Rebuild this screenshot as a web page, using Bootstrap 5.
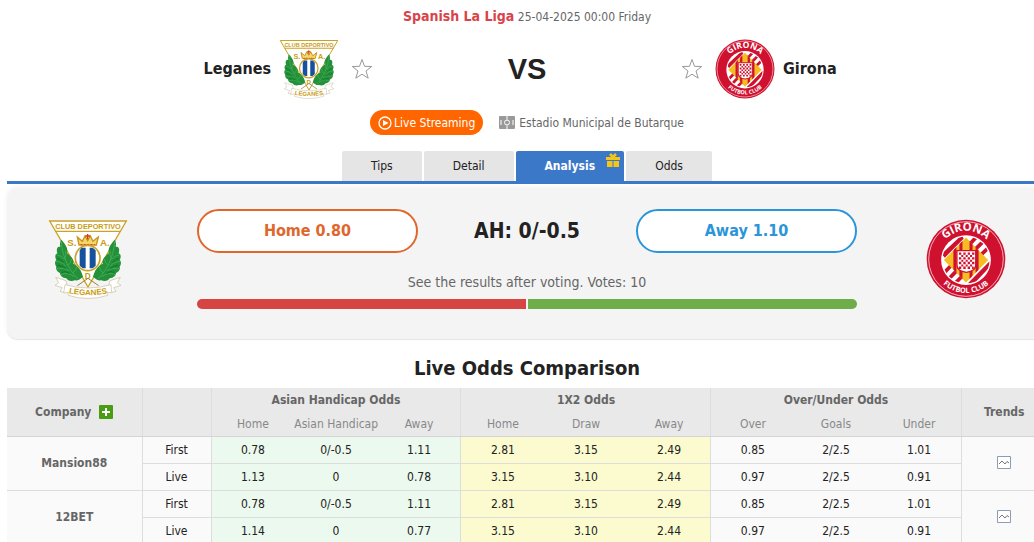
<!DOCTYPE html>
<html lang="en">
<head>
<meta charset="utf-8">
<meta name="viewport" content="width=device-width, initial-scale=1">
<title>Leganes VS Girona - Analysis</title>
<link href="https://cdn.jsdelivr.net/npm/bootstrap@5.3.0/dist/css/bootstrap.min.css" rel="stylesheet">
<style>
  body { font-family: "DejaVu Sans Condensed", "Open Sans", sans-serif; font-size: 12px; line-height: 18px; color: #222; background: #fff; overflow-x: hidden; }
  a { color: inherit; text-decoration: none; }
  svg { display: block; flex: none; }
  .site { margin-left: 7px; min-width: 1040px; }
  .fixture { padding-top: 6px; line-height: 20px; }
  .league { font-size: 14px; color: #d9434a; }
  .muted { color: #666; }
  .teams { margin-top: 12px; }
  .club { font-size: 16px; line-height: 24px; }
  .versus { width: 308px; font: bold 29px/36px "Liberation Sans", Arial, sans-serif; }
  .venue { padding-top: 11px; }
  .stream { height: 25px; padding: 0 8px; gap: 2px; border: 0; border-radius: 13px; background: #ff6600; color: #fff; }
  .tabs { border-bottom: 3px solid #3c78c8; gap: 2px; }
  .tabs a { position: relative; height: 30px; line-height: 31px; padding: 0 29px; background: #e5e5e5; border-radius: 2px 2px 0 0; }
  .tabs a.active { background: #3c78c8; color: #fff; font-weight: bold; }
  .tabs svg { position: absolute; top: 2px; right: 4px; }
  .vote { margin-top: 5px; padding: 20px 41px 30px; background: #f4f4f4; border-radius: 10px; border-bottom: 1px solid #e6e6e6; box-shadow: 0 -2px 5px rgba(0,0,0,.06); }
  .ballot { width: 660px; }
  .pick { width: 221px; height: 44px; border-radius: 22px; background: #fff; border: 2px solid #e0672c; color: #e0672c; font-size: 16px; font-weight: bold; }
  .pick.away { border-color: #2c94d8; color: #2c94d8; }
  .line-ah { font-size: 21px; }
  .tally { font-size: 14px; color: #666; }
  .split { height: 10px; gap: 2px; border-radius: 5px; overflow: hidden; }
  .split .home { background: #d64444; }
  .split .away { background: #6fac4a; }
  h2 { font-size: 20px; line-height: 24px; font-weight: bold; }
  .odds { width: 100%; table-layout: fixed; border-collapse: collapse; text-align: center; white-space: nowrap; }
  .odds th, .odds td { padding: 0; height: 27px; border-bottom: 1px solid #ddd; background: #fafafa; }
  .odds thead th { background: #e9e9e9; height: 24px; color: #666; border-color: #d4d4d4; }
  .odds thead .top { border-bottom: 0; }
  .odds thead .sub { color: #888; font-weight: normal; }
  .odds th.edge, .odds td.edge { border-right: 1px solid #ddd; }
  .odds tbody th { color: #666; }
  .odds td.ah { background: #ecf9ee; }
  .odds td.x12 { background: #fbfbcf; }
  .add { width: 14px; height: 14px; padding: 0; border: 0; background: none; }
</style>
</head>
<body>
<svg width="0" height="0" class="position-absolute" aria-hidden="true">
  <defs>
    <symbol id="leganes" viewBox="22 26 240 240">
      <path d="M27 32H257L142 230Z" fill="#fff" stroke="#c9a227" stroke-width="4"/>
      <path d="M44 63H240" stroke="#c9a227" stroke-width="4"/>
      <text x="142" y="56" font-family="Liberation Sans" font-weight="bold" font-size="22" text-anchor="middle" fill="#c99c12">CLUB DEPORTIVO</text>
      <g font-family="Liberation Sans" font-weight="bold" font-size="29" fill="#c99c12"><text x="80" y="107">S.</text><text x="178" y="107">A.</text></g>
      <path d="M45 201L76 211L81 231L70 246L58 243L65 232L43 225L54 217ZM239 201L208 211L203 231L214 246L226 243L219 232L241 225L230 217Z" fill="#fff" stroke="#c8bc9c" stroke-width="2"/>
      <g id="laurel">
        <path d="M62 88C76 103 83 115 79 128C95 141 101 150 97 160C111 165 121 177 127 199C118 207 111 212 102 210C92 214 80 211 77 204C65 203 58 195 58 188C48 182 45 176 47 170C41 161 43 152 47 149C42 141 43 131 50 129C46 116 50 106 59 110C57 103 58 94 62 88Z" fill="#24913a"/>
        <path d="M62 94C65 137 82 176 113 207M47 133Q61 136 70 146M45 153Q64 154 76 168M49 175Q70 171 86 181M59 193Q80 184 101 199M75 121Q78 133 72 147M93 146Q91 157 82 165M108 169Q106 182 97 187" stroke="#4fb560" stroke-width="2" fill="none"/>
        <path d="M50 144Q60 147 68 156M50 165Q62 164 75 174M62 186Q76 180 87 190" stroke="#0b6426" stroke-width="2" fill="none"/>
      </g>
      <use href="#laurel" transform="matrix(-1 0 0 1 284 0)"/>
      <path d="M115 104L110 80L125 93L133 77L141 91L149 77L157 93L173 80L167 104Z" fill="#f5d66c" stroke="#c9941c" stroke-width="4"/>
      <path d="M141 71V87M134 77H148" stroke="#cf3b1e" stroke-width="4"/>
      <path d="M120 103H162" stroke="#cf4a24" stroke-width="4" stroke-dasharray="5 5"/>
      <ellipse cx="141" cy="143" rx="37" ry="38" fill="#fff" stroke="#c9a227" stroke-width="5"/>
      <path d="M123 112H135V174H126L117 166V120ZM147 112H156L165 120V166L156 174H147Z" fill="#17509b"/>
      <text x="141" y="206" font-family="Liberation Sans" font-weight="bold" font-size="25" text-anchor="middle" fill="#c99c12">D</text>
      <path d="M110 226L142 204M174 226L142 204" stroke="#9a8334" stroke-width="3"/>
      <path d="M73 223Q142 243 211 223L213 247L199 246L201 255Q142 274 83 255L83 246L69 248Z" fill="#fff" stroke="#c8bc9c" stroke-width="2"/>
      <path id="ribbon" d="M76 247Q142 262 208 247" fill="none"/>
      <text font-family="Liberation Sans" font-weight="bold" font-size="24" fill="#c99c12" text-anchor="middle"><textPath href="#ribbon" startOffset="50%">LEGANES</textPath></text>
    </symbol>
    <symbol id="girona" viewBox="22 25 238 238">
      <circle cx="141" cy="144" r="117" fill="#cf112f"/>
      <circle cx="141" cy="144" r="111" fill="none" stroke="#fff" stroke-width="2"/>
      <clipPath id="disc"><circle cx="141" cy="147" r="70"/></clipPath>
      <circle cx="141" cy="147" r="74" fill="#fff"/>
      <g clip-path="url(#disc)">
        <path d="M68 129L129 72L134 84L78 140ZM148 215L211 151L216 163L158 225Z" fill="#cf112f"/>
        <g stroke="#cf112f" stroke-width="11"><path d="M154 98L174 76M170 114L191 93M187 130L208 110M75 186L96 164M91 202L112 180M107 218L128 197"/></g>
        <clipPath id="diamond"><path d="M141 80L207 147L141 214L75 147Z"/></clipPath>
        <path d="M141 80L207 147L141 214L75 147Z" fill="#f6bd22"/>
        <path clip-path="url(#diamond)" d="M108 75V220M126 75V220M156 75V220M174 75V220" stroke="#cf112f" stroke-width="9"/>
      </g>
      <path d="M114 119H170V162Q170 180 142 184Q114 180 114 162Z" fill="#fff" stroke="#cf112f" stroke-width="4"/>
      <path d="M120 128H166M120 142H166M120 156H166M120 170H164" stroke="#cf112f" stroke-width="7" stroke-dasharray="7 6"/>
      <path d="M127 135H160M127 149H160M127 163H160" stroke="#cf112f" stroke-width="6" stroke-dasharray="6 7"/>
      <path id="arc-top" d="M57 144A84 84 0 0 1 225 144" fill="none"/>
      <path id="arc-low" d="M40 144A101 101 0 0 0 242 144" fill="none"/>
      <g font-family="Open Sans" font-weight="bold" fill="#fff" text-anchor="middle"><text font-size="34"><textPath href="#arc-top" startOffset="50%">GIRONA</textPath></text><text font-size="22"><textPath href="#arc-low" startOffset="50%">FUTBOL CLUB</textPath></text></g>
    </symbol>
    <symbol id="star" viewBox="0 0 22 22"><path d="M11 1.5L13.5 8.3L20.7 8.5L15 13L17.2 20.2L11 16.2L4.8 20.2L7 13L1.3 8.5L8.5 8.3Z" fill="none" stroke="#999"/></symbol>
    <symbol id="trend" viewBox="0 0 14 14"><path d="M.5 .5H13.5V12.5H.5Z" fill="#fff" stroke="#8a9db5"/><path d="M2 8L5 5L8 8L10 5.500L12 7" fill="none" stroke="#777"/></symbol>
  </defs>
</svg>

<div class="site">
  <header>
    <div class="fixture text-center"><a href="#" class="league fw-bold">Spanish La Liga</a> <span class="muted">25-04-2025 00:00 Friday</span></div>
    <div class="teams d-flex align-items-center">
      <div class="col d-flex align-items-center justify-content-end">
        <a href="#" class="club fw-bold me-2">Leganes</a>
        <svg width="60" height="60" role="img" aria-label="Leganes crest"><use href="#leganes"/></svg>
        <a href="#" class="ms-2 ps-1" aria-label="Follow Leganes"><svg width="22" height="22"><use href="#star"/></svg></a>
      </div>
      <div class="versus text-center">VS</div>
      <div class="col d-flex align-items-center">
        <a href="#" class="me-2 pe-1" aria-label="Follow Girona"><svg width="22" height="22"><use href="#star"/></svg></a>
        <svg width="60" height="60" role="img" aria-label="Girona crest"><use href="#girona"/></svg>
        <a href="#" class="club fw-bold ms-2">Girona</a>
      </div>
    </div>
    <div class="venue d-flex justify-content-center align-items-center gap-3 mb-3">
      <button type="button" class="stream d-flex align-items-center">
        <svg width="14" height="14" viewBox="0 0 14 14"><circle cx="7" cy="7" r="6" fill="none" stroke="#fff" stroke-width="1.300"/><path d="M5 4L10.500 7L5 10Z" fill="#fff"/></svg>Live Streaming</button>
      <span class="muted d-flex align-items-center gap-1">
        <svg width="16" height="13" viewBox="0 0 16 13"><rect width="16" height="13" rx="1" fill="#999"/><path d="M8 0V3.500M8 9.500V13M2 4V9M14 4V9" stroke="#fff"/><circle cx="8" cy="6.500" r="2.500" fill="none" stroke="#fff"/></svg>Estadio Municipal de Butarque</span>
    </div>
    <nav class="tabs d-flex justify-content-center">
      <a href="#">Tips</a><a href="#">Detail</a>
      <a href="#" class="active">Analysis<svg width="14" height="14" viewBox="0 0 14 14"><path d="M0 4H14V7H0ZM1 8H6.500V14H1ZM7.500 8H13V14H7.500Z" fill="#f5c518"/><path d="M7 4L4 1M7 4L10 1" stroke="#f5c518" stroke-width="2.500"/></svg></a>
      <a href="#">Odds</a>
    </nav>
  </header>

  <section class="vote d-flex justify-content-between align-items-center">
    <svg width="80" height="80" role="img" aria-label="Leganes crest"><use href="#leganes"/></svg>
    <div class="ballot">
      <div class="d-flex justify-content-between align-items-center">
        <button type="button" class="pick">Home 0.80</button>
        <strong class="line-ah">AH: 0/-0.5</strong>
        <button type="button" class="pick away">Away 1.10</button>
      </div>
      <div class="tally text-center pt-3 mt-1 mb-2">See the results after voting. Votes: 10</div>
      <div class="split d-flex"><div class="home" style="width:50%"></div><div class="away" style="width:50%"></div></div>
    </div>
    <svg width="80" height="80" role="img" aria-label="Girona crest"><use href="#girona"/></svg>
  </section>

  <section>
    <h2 class="text-center mt-3 mb-2">Live Odds Comparison</h2>
    <table class="odds">
      <colgroup><col style="width:135px"><col style="width:69px"><col span="9"><col style="width:86px"></colgroup>
      <thead>
        <tr><th rowspan="2" class="edge"><span class="d-flex justify-content-center align-items-center gap-2">Company <button type="button" class="add" aria-label="Add company"><svg width="14" height="14" viewBox="0 0 14 14"><rect width="14" height="14" rx="1" fill="#489d12"/><path d="M7 3V11M3 7H11" stroke="#fff" stroke-width="2"/></svg></button></span></th><th rowspan="2" class="edge"></th><th colspan="3" class="top edge">Asian Handicap Odds</th><th colspan="3" class="top edge">1X2 Odds</th><th colspan="3" class="top edge">Over/Under Odds</th><th rowspan="2">Trends</th></tr>
        <tr><th class="sub">Home</th><th class="sub">Asian Handicap</th><th class="sub edge">Away</th><th class="sub">Home</th><th class="sub">Draw</th><th class="sub edge">Away</th><th class="sub">Over</th><th class="sub">Goals</th><th class="sub edge">Under</th></tr>
      </thead>
      <tbody>
        <tr><th rowspan="2" class="edge">Mansion88</th><td class="edge">First</td><td class="ah">0.78</td><td class="ah">0/-0.5</td><td class="ah edge">1.11</td><td class="x12">2.81</td><td class="x12">3.15</td><td class="x12 edge">2.49</td><td>0.85</td><td>2/2.5</td><td class="edge">1.01</td><td rowspan="2"><a href="#" aria-label="Mansion88 trends"><svg class="mx-auto" width="14" height="14"><use href="#trend"/></svg></a></td></tr>
        <tr><td class="edge">Live</td><td class="ah">1.13</td><td class="ah">0</td><td class="ah edge">0.78</td><td class="x12">3.15</td><td class="x12">3.10</td><td class="x12 edge">2.44</td><td>0.97</td><td>2/2.5</td><td class="edge">0.91</td></tr>
        <tr><th rowspan="2" class="edge">12BET</th><td class="edge">First</td><td class="ah">0.78</td><td class="ah">0/-0.5</td><td class="ah edge">1.11</td><td class="x12">2.81</td><td class="x12">3.15</td><td class="x12 edge">2.49</td><td>0.85</td><td>2/2.5</td><td class="edge">1.01</td><td rowspan="2"><a href="#" aria-label="12BET trends"><svg class="mx-auto" width="14" height="14"><use href="#trend"/></svg></a></td></tr>
        <tr><td class="edge">Live</td><td class="ah">1.14</td><td class="ah">0</td><td class="ah edge">0.77</td><td class="x12">3.15</td><td class="x12">3.10</td><td class="x12 edge">2.44</td><td>0.97</td><td>2/2.5</td><td class="edge">0.91</td></tr>
      </tbody>
    </table>
  </section>
</div>
<script src="https://cdn.jsdelivr.net/npm/bootstrap@5.3.0/dist/js/bootstrap.bundle.min.js"></script>
</body>
</html>
